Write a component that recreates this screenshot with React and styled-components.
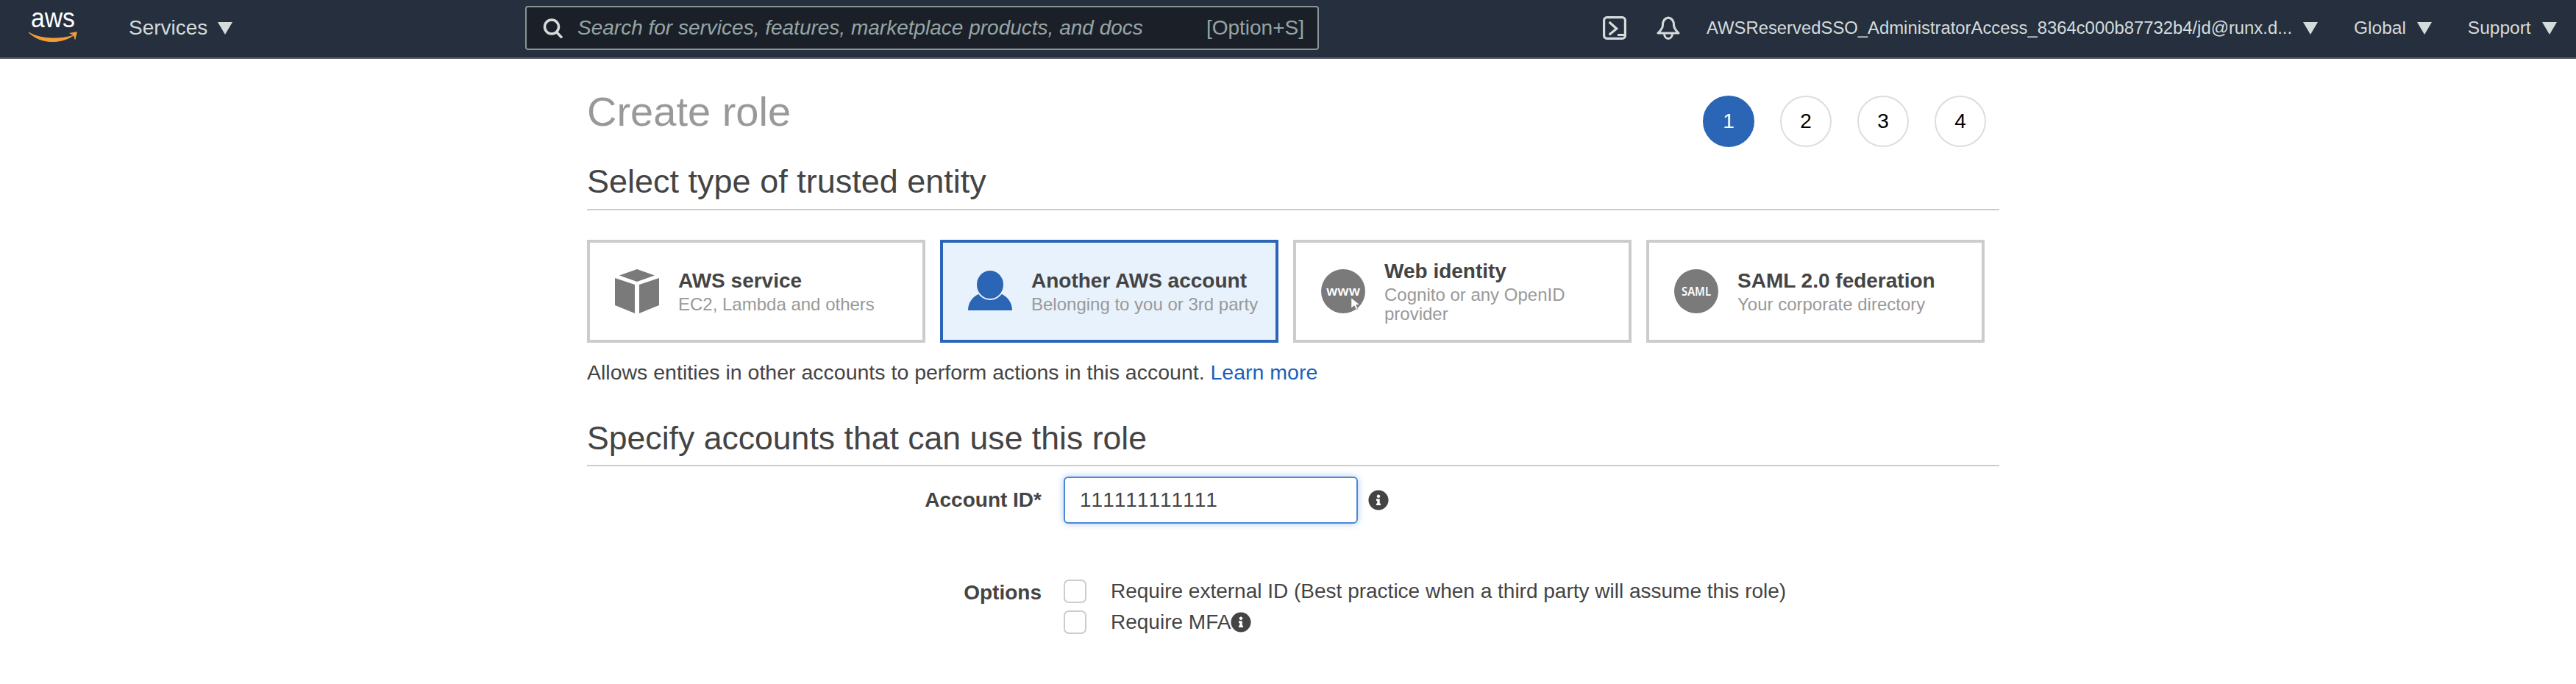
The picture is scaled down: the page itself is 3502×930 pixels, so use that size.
import React from 'react';
import styled, { createGlobalStyle } from 'styled-components';
import { FaInfoCircle } from 'react-icons/fa';

const GlobalStyle = createGlobalStyle`
  html, body {
    margin: 0;
    padding: 0;
    background: #ffffff;
    font-family: "Liberation Sans", Arial, sans-serif;
    color: #444444;
  }
  * {
    box-sizing: border-box;
  }
`;

const NavBar = styled.header`
  display: flex;
  align-items: center;
  height: 80px;
  padding: 0 27px 2px 39px;
  background: #252f3e;
  border-bottom: 2px solid #545b64;
  color: #d5dbdb;
`;

const Logo = styled.svg`
  width: 66px;
  height: 40px;
  margin-right: 70px;
  flex: none;
  overflow: visible;
`;

const ServicesMenu = styled.div`
  display: flex;
  align-items: center;
  gap: 14px;
  width: 539px;
  font-size: 28px;
  flex: none;
`;

const Caret = styled.span`
  width: 0;
  height: 0;
  border-left: 10px solid transparent;
  border-right: 10px solid transparent;
  border-top: 17px solid #d5dbdb;
  flex: none;
`;

const SearchBox = styled.div`
  display: flex;
  align-items: center;
  width: 1079px;
  height: 60px;
  padding: 0 18px 0 22px;
  background: #1b2028;
  border: 2px solid #879596;
  border-radius: 4px;
  font-size: 28px;
  color: #95a5a6;
  flex: none;
`;

const SearchPlaceholder = styled.span`
  flex: 1;
  margin-left: 20px;
  font-style: italic;
  white-space: nowrap;
`;

const NavIcons = styled.div`
  display: flex;
  align-items: center;
  gap: 41px;
  margin-left: 386px;
  margin-right: 36px;
  flex: none;
`;

const NavMenu = styled.div`
  display: flex;
  align-items: center;
  gap: ${(p) => p.$gap || 15}px;
  margin-right: ${(p) => p.$after || 0}px;
  font-size: ${(p) => p.$size || 24.5}px;
  white-space: nowrap;
  flex: none;
`;

const Page = styled.main`
  width: 1920px;
  margin-left: 798px;
`;

const TitleRow = styled.div`
  display: flex;
  justify-content: space-between;
  height: 140px;
  padding: 40px 18px 0 0;
`;

const PageTitle = styled.h1`
  margin: 0;
  font-size: 56px;
  line-height: 64px;
  font-weight: 400;
  color: #999999;
`;

const Steps = styled.ol`
  display: flex;
  gap: 35px;
  margin: 10px 0 0;
  padding: 0;
  list-style: none;
`;

const Step = styled.li`
  display: flex;
  align-items: center;
  justify-content: center;
  width: 70px;
  height: 70px;
  border-radius: 50%;
  border: 2px solid ${(p) => (p.$active ? '#2b65b5' : '#dddddd')};
  background: ${(p) => (p.$active ? '#2b65b5' : '#ffffff')};
  color: ${(p) => (p.$active ? '#ffffff' : '#000000')};
  font-size: 28px;
`;

const SectionTitle = styled.h2`
  margin: 0;
  height: ${(p) => p.$height}px;
  font-size: ${(p) => p.$size}px;
  line-height: 54px;
  font-weight: 400;
  color: #444444;
  border-bottom: 2px solid #cccccc;
`;

const Cards = styled.div`
  display: flex;
  gap: 20px;
  margin-top: 40px;
`;

const Card = styled.div`
  display: flex;
  align-items: center;
  gap: 26px;
  width: 460px;
  height: 140px;
  padding: 0 20px 0 34px;
  border: 4px solid ${(p) => (p.$selected ? '#2b65b5' : '#cccccc')};
  background: ${(p) => (p.$selected ? '#e8f2fc' : '#ffffff')};
`;

const CardIcon = styled.svg`
  width: 60px;
  height: 60px;
  flex: none;
`;

const CardTitle = styled.div`
  font-size: 28px;
  line-height: 34px;
  font-weight: 700;
  color: #444444;
`;

const CardSub = styled.div`
  margin-top: 2px;
  font-size: 24px;
  line-height: 26px;
  color: #999999;
`;

const Description = styled.p`
  margin: 22px 0 45px;
  font-size: 28.5px;
  line-height: 36px;
  color: #444444;
`;

const Link = styled.a`
  color: #1b5fba;
  text-decoration: none;
`;

const FormRow = styled.div`
  display: grid;
  grid-template-columns: 618px 1fr;
  column-gap: 30px;
  margin-top: ${(p) => p.$top}px;
`;

const FieldLabel = styled.label`
  text-align: right;
  font-size: 28px;
  line-height: 36px;
  font-weight: 700;
  color: #444444;
  padding-top: ${(p) => p.$top || 0}px;
`;

const InputWrap = styled.div`
  display: flex;
  align-items: center;
  gap: 14px;
`;

const AccountInput = styled.input`
  width: 400px;
  height: 64px;
  padding: 0 20px;
  border: 2px solid #4a88d8;
  border-radius: 6px;
  outline: none;
  box-shadow: 0 0 10px rgba(74, 136, 216, 0.45);
  font-family: inherit;
  font-size: 28px;
  font-kerning: none;
  color: #444444;
`;

const InfoIcon = styled(FaInfoCircle)`
  width: 28px;
  height: 28px;
  color: #444444;
  flex: none;
`;

const OptionList = styled.div`
  display: flex;
  flex-direction: column;
  gap: 10px;
`;

const Option = styled.div`
  display: flex;
  align-items: center;
  height: 32px;
  font-size: 28px;
  color: #444444;
  white-space: nowrap;
`;

const Checkbox = styled.span`
  width: 31px;
  height: 32px;
  margin-right: 33px;
  border: 2px solid #cccccc;
  border-radius: 7px;
  background: #ffffff;
  flex: none;
`;

const cardsData = [
  { id: 'service', title: 'AWS service', sub: 'EC2, Lambda and others', icon: 'box' },
  { id: 'account', title: 'Another AWS account', sub: 'Belonging to you or 3rd party', icon: 'person', selected: true },
  { id: 'web', title: 'Web identity', sub: 'Cognito or any OpenID provider', icon: 'www' },
  { id: 'saml', title: 'SAML 2.0 federation', sub: 'Your corporate directory', icon: 'saml' },
];

const CardGlyph = ({ kind }) => {
  if (kind === 'box') {
    return (
      <CardIcon viewBox="0 0 60 60">
        <path d="M30 0 L54 8.5 L30 17 L6 8.5 Z" fill="#7a7a7a" />
        <path d="M0 12 L27 21 L27 60 L0 49 Z" fill="#7a7a7a" />
        <path d="M60 12 L33 21 L33 60 L60 49 Z" fill="#7a7a7a" />
      </CardIcon>
    );
  }
  if (kind === 'person') {
    return (
      <CardIcon viewBox="0 0 60 60">
        <path d="M0 56 C0 46 5 38 16 33 L44 33 C55 38 60 46 60 56 Z" fill="#2b65b5" />
        <ellipse cx="30" cy="21" rx="19" ry="20" fill="#2b65b5" stroke="#e8f2fc" strokeWidth="2" />
      </CardIcon>
    );
  }
  return (
    <CardIcon viewBox="0 0 60 60">
      <circle cx="30" cy="30" r="30" fill="#7a7a7a" />
      <text
        x="30"
        y="36"
        textAnchor="middle"
        fontFamily="'Noto Sans', sans-serif"
        fontSize={kind === 'www' ? 18 : 16}
        fontWeight="600"
        fill="#ffffff"
        textLength={kind === 'www' ? 46 : 40}
        lengthAdjust="spacingAndGlyphs"
      >
        {kind === 'www' ? 'www' : 'SAML'}
      </text>
      {kind === 'www' && (
        <path d="M41 39 L41 53 L45 49.5 L48 55 L50 54 L47.5 48.5 L52 48 Z" fill="#ffffff" stroke="#7a7a7a" strokeWidth="0.5" />
      )}
    </CardIcon>
  );
};

const App = () => (
  <>
    <GlobalStyle />
    <NavBar>
      <Logo viewBox="0 0 66 40">
        <text
          x="3"
          y="19"
          fontFamily="'Liberation Sans', sans-serif"
          fontSize="36"
          fill="#ffffff"
          textLength="60"
          lengthAdjust="spacingAndGlyphs"
        >
          aws
        </text>
        <path d="M0 26 C16 42 44 42 61 30 C44 36 16 36 0 26 Z" fill="#f29d38" stroke="#f29d38" strokeWidth="1" strokeLinejoin="round" />
        <path d="M55 27 L66 25 L63 37 L61 30 Z" fill="#f29d38" />
      </Logo>
      <ServicesMenu>
        Services
        <Caret />
      </ServicesMenu>
      <SearchBox>
        <svg width="27" height="27" viewBox="0 0 27 27" fill="none" stroke="#d5dbdb" strokeWidth="3.5">
          <circle cx="12" cy="11.5" r="9.5" />
          <path d="M18.5 18.5 L26 26.5" />
        </svg>
        <SearchPlaceholder>Search for services, features, marketplace products, and docs</SearchPlaceholder>
        <span>[Option+S]</span>
      </SearchBox>
      <NavIcons>
        <svg width="32" height="32" viewBox="0 0 32 32" fill="none" stroke="#d5dbdb" strokeWidth="3.2">
          <rect x="1.6" y="1.6" width="28.8" height="28.8" rx="4" />
          <path d="M8.7 8 L18.7 17 L8.7 25.3 M20 25.5 L29 25.5" />
        </svg>
        <svg width="32" height="32" viewBox="0 0 32 32" fill="none" stroke="#d5dbdb" strokeWidth="3">
          <path d="M16 2 C10 3 8.5 8 8.5 12 C8.5 17 5 20 2 23 L30 23 C27 20 23.5 17 23.5 12 C23.5 8 22 3 16 2 Z" strokeLinejoin="round" />
          <path d="M10.5 23 C10.5 33 21.5 33 21.5 23" />
        </svg>
      </NavIcons>
      <NavMenu $size={23.85} $after={49}>
        AWSReservedSSO_AdministratorAccess_8364c000b87732b4/jd@runx.d...
        <Caret />
      </NavMenu>
      <NavMenu $after={49}>
        Global
        <Caret />
      </NavMenu>
      <NavMenu>
        Support
        <Caret />
      </NavMenu>
    </NavBar>
    <Page>
      <TitleRow>
        <PageTitle>Create role</PageTitle>
        <Steps>
          <Step $active>1</Step>
          <Step>2</Step>
          <Step>3</Step>
          <Step>4</Step>
        </Steps>
      </TitleRow>
      <SectionTitle $height={66} $size={45}>Select type of trusted entity</SectionTitle>
      <Cards>
        {cardsData.map((card) => (
          <Card key={card.id} $selected={card.selected}>
            <CardGlyph kind={card.icon} />
            <div>
              <CardTitle>{card.title}</CardTitle>
              <CardSub>{card.sub}</CardSub>
            </div>
          </Card>
        ))}
      </Cards>
      <Description>
        Allows entities in other accounts to perform actions in this account. <Link>Learn more</Link>
      </Description>
      <SectionTitle $height={65} $size={44.6}>Specify accounts that can use this role</SectionTitle>
      <FormRow $top={14}>
        <FieldLabel $top={14}>Account ID*</FieldLabel>
        <InputWrap>
          <AccountInput readOnly value="111111111111" />
          <InfoIcon />
        </InputWrap>
      </FormRow>
      <FormRow $top={76}>
        <FieldLabel>Options</FieldLabel>
        <OptionList>
          <Option>
            <Checkbox />
            Require external ID (Best practice when a third party will assume this role)
          </Option>
          <Option>
            <Checkbox />
            Require MFA
            <InfoIcon />
          </Option>
        </OptionList>
      </FormRow>
    </Page>
  </>
);

export default App;
